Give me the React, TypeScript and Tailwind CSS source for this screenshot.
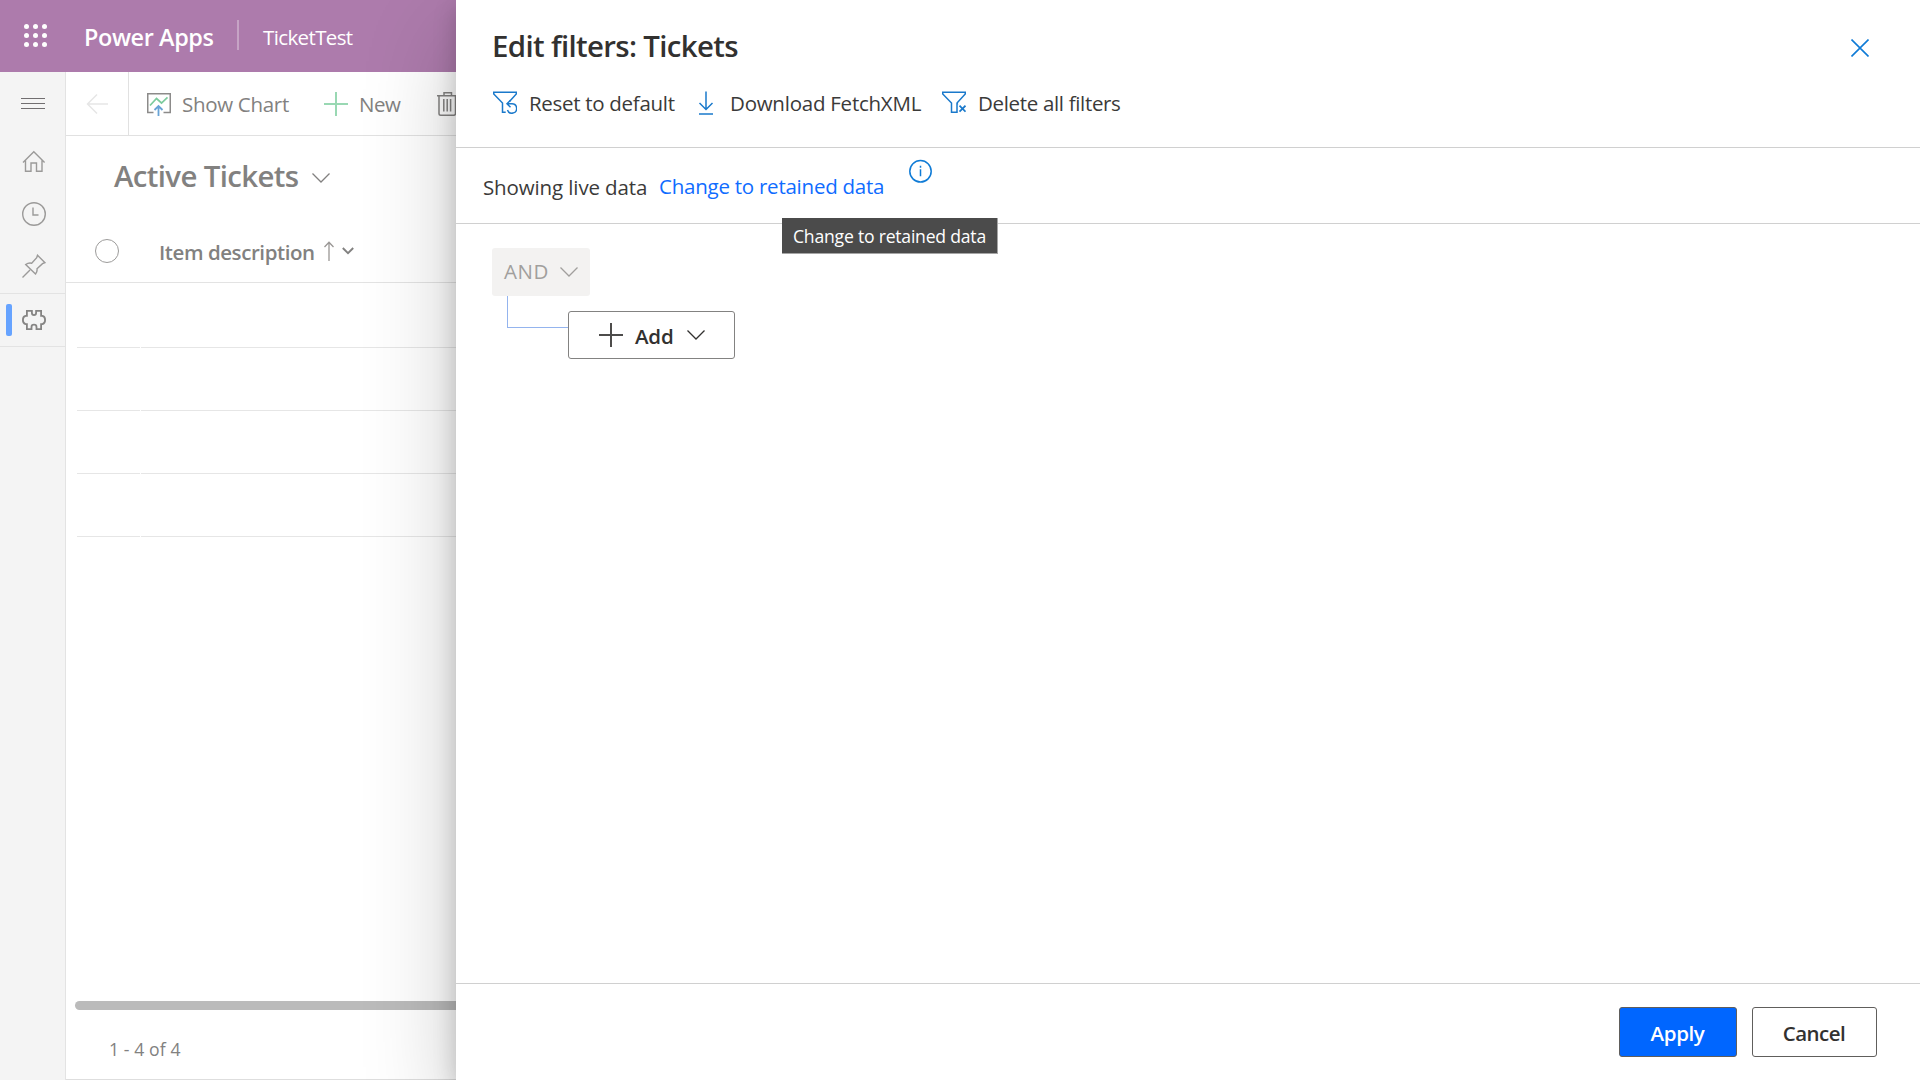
import type { ReactNode } from 'react';

type IconProps = { className?: string };

function Icon({ className = '', size = 24, sw = 1.5, children }: { className?: string; size?: number; sw?: number; children: ReactNode }) {
  return (
    <svg className={`block shrink-0 ${className}`} width={size} height={size} viewBox={`0 0 ${size} ${size}`} fill="none" stroke="currentColor" strokeWidth={sw}>
      {children}
    </svg>
  );
}

function Waffle({ className }: IconProps) {
  return (
    <Icon className={className}>
      <g fill="currentColor" stroke="none">
        {[2.5, 11.5, 20.5].map((y) => [2.5, 11.5, 20.5].map((x) => <circle key={`${x}-${y}`} cx={x} cy={y} r="2.5" />))}
      </g>
    </Icon>
  );
}

function Chevron({ className }: IconProps) {
  return (
    <svg className={`block shrink-0 ${className ?? ''}`} width="18" height="10" viewBox="0 0 18 10" fill="none" stroke="currentColor" strokeWidth="1.3">
      <path d="M.5.5 9 9 17.500.5" />
    </svg>
  );
}

function ShowChartIcon({ className }: IconProps) {
  return (
    <Icon className={className}>
      <path d="M6.500 19.500H.75V.75h22.500v18.750H16.500" stroke="#8c8b8a" />
      <path d="M3 12.500 9.500 5.500l5 4.500L20.500 4.300" stroke="#7ccb9d" strokeWidth="1.700" />
      <path d="M11.500 23V13M7.500 17l4-4 4 4" stroke="#67a3d6" strokeWidth="1.800" />
    </Icon>
  );
}

function PlusIcon({ className }: IconProps) {
  return (
    <Icon className={className} sw={2}>
      <path d="M12 0v24M0 12h24" />
    </Icon>
  );
}

function TrashIcon({ className }: IconProps) {
  return (
    <Icon className={className}>
      <path d="M1 3.750h22M8 3.500V.75h7.500V3.500M3 4v17.500q0 1.750 1.750 1.750h13q1.750 0 1.750-1.750V4M7.800 7v12.500M11.200 7v12.500M14.600 7v12.500" />
    </Icon>
  );
}

function Rail() {
  return (
    <nav className="flex w-[66px] shrink-0 flex-col border-r border-[#e3e3e3] bg-[#f4f4f4] text-[#9b9a99]">
      <Icon className="mt-[20px] ml-[21px] text-[#716e70]" sw={1.200}>
        <path d="M0 6.500h24M0 11.500h24M0 16.500h24" />
      </Icon>
      <Icon className="mt-[34px] ml-[22px]" sw={1.400}>
        <path d="M1 12.500 11.800 1.800 22.600 12.500M3.500 10.500V21.300H9V13h5.500v8.300H20V10.500" />
      </Icon>
      <Icon className="mt-[28px] ml-[22px]" sw={1.400}>
        <circle cx="12" cy="12" r="11.300" />
        <path d="M11 5.500v7.500h5.500" />
      </Icon>
      <Icon className="mt-[28px] ml-[22px]" sw={1.400}>
        <path d="M.5 23.500 8 16M15.500 1.200l7.500 7.500-2.500 1-5.500 5q.500 3-1.500 5.300L3.700 10.500Q6.500 8.500 9.700 9.200l5-5.500z" />
      </Icon>
      <div className="mt-[15px] flex h-[54px] items-center border-y border-[#e3e3e3]">
        <div className="ml-[6px] h-8 w-[6px] rounded-[2px] bg-[#66a3ff]" />
        <Icon className="ml-[10px] text-[#858483]" sw={1.800}>
          <path d="M4.900 2.900h5v2.200q0 2 2.100 2t2.100-2V2.900h5v5h1.200q2.800.600 2.800 4.100t-2.800 4.100h-1.200v5h-4.600v-2.200q0-2.200-2.500-2.200t-2.500 2.200v2.200H4.900v-5H3.700Q.9 15.500.9 12t2.800-4.100h1.200z" />
        </Icon>
      </div>
    </nav>
  );
}

function GridRow() {
  return (
    <div className="ml-[11px] flex h-[63px] gap-[1px]">
      <div className="w-[63px] border-b border-[#e6e6e6]" />
      <div className="flex-1 border-b border-[#e6e6e6]" />
    </div>
  );
}

function TicketView() {
  return (
    <main className="flex flex-1 flex-col border-b border-[#dedede] bg-white text-[20.5px] text-[#828180]">
      <div className="flex h-16 shrink-0 items-center border-b border-[#e1e1e1] whitespace-nowrap">
        <div className="flex h-full w-[63px] items-center border-r border-[#e1e1e1] text-[#e6e6e6]">
          <Icon className="ml-[20px]">
            <path d="M22 12H1.500M11 2.500 1.500 12 11 21.500" />
          </Icon>
        </div>
        <ShowChartIcon className="ml-[18px] mt-[2px]" />
        <span className="ml-[11px] w-[142px] pt-[2px] tracking-[-0.3px]">Show Chart</span>
        <PlusIcon className="text-[#99d8b3]" />
        <span className="ml-[11px] w-[77px] pt-[2px] tracking-[-0.45px]">New</span>
        <TrashIcon className="text-[#858483]" />
      </div>
      <div className="flex h-20 shrink-0 items-center pl-[48px] whitespace-nowrap">
        <h1 className="w-[198px] pt-px text-[29.4px] font-semibold tracking-[-0.63px]">Active Tickets</h1>
        <Chevron className="mt-[3px]" />
      </div>
      <div className="flex h-[67px] shrink-0 items-start border-b border-[#e3e3e3] whitespace-nowrap">
        <div className="mt-[23px] ml-[29px] size-6 rounded-full border border-[#9c9b9a]" />
        <span className="mt-[20px] ml-[40px] w-[165px] leading-[32px] font-semibold tracking-[-0.43px]">Item description</span>
        <svg className="mt-[25px] block shrink-0" width="10" height="20" viewBox="0 0 10 20" fill="none" stroke="#9a9795" strokeWidth="1.300">
          <path d="M5 20V1.500M.5 6 5 1.200 9.500 6" />
        </svg>
        <svg className="mt-[31px] ml-[8px] block shrink-0" width="12" height="8" viewBox="0 0 12 8" fill="none" stroke="currentColor" strokeWidth="1.900">
          <path d="M.8 1 6 6.200 11.200 1" />
        </svg>
      </div>
      <div className="pt-[2px]">
        <GridRow />
        <GridRow />
        <GridRow />
        <GridRow />
      </div>
      <div className="mt-auto ml-[9px] h-[9px] w-full shrink-0 rounded-full bg-[#bbbbbb]" />
      <footer className="flex h-[69px] shrink-0 items-center pt-[9px] pl-[43px] text-[17.6px] tracking-[0.1px]">1 - 4 of 4</footer>
    </main>
  );
}

function Command({ icon, label, className }: { icon: ReactNode; label: string; className: string }) {
  return (
    <button className={`flex items-center text-left whitespace-nowrap ${className}`}>
      {icon}
      <span>{label}</span>
    </button>
  );
}

function FilterPanel() {
  return (
    <section className="relative flex w-[1464px] shrink-0 flex-col bg-white text-[20.5px] text-[#3b3a39] shadow-[0_38px_86px_rgba(0,0,0,0.22),0_7px_22px_rgba(0,0,0,0.18)]">
      <header className="flex h-[148px] shrink-0 flex-col border-b border-[#d0d0d0]">
        <div className="mt-[24px] flex h-[44px] items-center justify-between pr-[51px] pl-[36px]">
          <h2 className="text-[29.4px] font-semibold tracking-[-0.65px] text-[#323130]">Edit filters: Tickets</h2>
          <Icon size={18} sw={1.600} className="mt-[4px] text-[#0f7bd6]">
            <path d="M.5.5l17 17M17.500.5l-17 17" />
          </Icon>
        </div>
        <div className="mt-[19px] flex h-[32px] items-center pl-[37px]">
          <Command
            className="w-[201px] gap-[12px] tracking-[-0.3px]"
            label="Reset to default"
            icon={
              <Icon className="text-[#1a79cb]">
                <path d="M16.500 10.500 23.300 3V1.200H.75V3l8.750 9v9.300h3.200" />
                <path d="M14 12.800h5a4.700 4.700 0 1 1-4.500 6.200M17.500 9.300 14 12.800l3.500 3.500" />
              </Icon>
            }
          />
          <Command
            className="w-[248px] gap-[12px] tracking-[-0.24px]"
            label="Download FetchXML"
            icon={
              <Icon className="text-[#1a79cb]">
                <path d="M12 .5v18M5.500 12 12 18.500 18.500 12M5 23h14" />
              </Icon>
            }
          />
          <Command
            className="gap-[12px] tracking-[-0.33px]"
            label="Delete all filters"
            icon={
              <Icon className="text-[#1a79cb]">
                <path d="M16 12.500 15 13v8.300H9.500V12L.75 3V1.200h22.500V3L15 12v1.500" />
                <path d="M17.500 14.700l6 6M23.500 14.700l-6 6" strokeWidth="1.700" />
              </Icon>
            }
          />
        </div>
      </header>

      <div className="flex h-[76px] shrink-0 items-start border-b border-[#d0d0d0] whitespace-nowrap">
        <span className="mt-[23px] ml-[27px] w-[176px] leading-[32px] tracking-[-0.12px]">Showing live data</span>
        <a className="mt-[22px] w-[249px] leading-[32px] tracking-[-0.24px] text-[#0f6cff]">Change to retained data</a>
        <Icon size={24} className="mt-[11px] text-[#0f7bd6]">
          <circle cx="12.500" cy="12.300" r="10.700" />
          <path d="M12.500 10.300v7M12.500 6.800v2" />
        </Icon>
      </div>

      <div className="flex flex-1 flex-col pt-[24px] pl-[36px]">
        <button className="flex h-12 w-[98px] items-center rounded-[3px] bg-[#f3f2f1] pl-[12px] text-left text-[#a19f9d]">
          <span className="w-[56px] pb-[1px] tracking-[0.6px]">AND</span>
          <Chevron className="-mt-[1px]" />
        </button>
        <div className="flex items-start pl-[15px]">
          <div className="h-8 w-[61px] border-b border-l border-[#94b4ee]" />
          <button className="mt-[15px] flex h-12 w-[167px] items-center rounded-[3px] border border-[#838281] pl-[30px] text-left text-[#323130]">
            <PlusIcon className="text-[#4d4c4b]" />
            <span className="ml-[12px] w-[52px] pt-[2px] font-semibold tracking-[-0.2px]">Add</span>
            <Chevron />
          </button>
        </div>
      </div>

      <footer className="flex h-[97px] shrink-0 items-start justify-end gap-[15px] border-t border-[#d0d0d0] pt-[23px] pr-[43px] font-semibold">
        <button className="flex h-[50px] w-[118px] items-center justify-center rounded-[3px] border border-[#605e5c] bg-[#0066ff] pt-[2px] pr-px tracking-[-0.4px] text-white">Apply</button>
        <button className="flex h-[50px] w-[125px] items-center justify-center rounded-[3px] border border-[#605e5c] bg-white pt-[2px] pr-px tracking-[-0.5px] text-[#323130]">Cancel</button>
      </footer>

      <div className="absolute top-[218px] left-[326px] flex h-[36px] w-[216px] items-center border-r border-b border-[#a5a5a5] bg-[#4b4b4b] pt-[2px] pl-[11px] text-[17.6px] tracking-[-0.22px] whitespace-nowrap text-white">
        Change to retained data
      </div>
    </section>
  );
}

export default function App() {
  return (
    <div className="flex h-[1080px] w-[1920px] overflow-hidden bg-white font-['Open_Sans','Noto_Sans',sans-serif]">
      <div className="flex w-[456px] shrink-0 flex-col overflow-hidden">
        <header className="flex h-[72px] shrink-0 items-center bg-[#ad7bac] whitespace-nowrap text-white">
          <Waffle className="ml-[24px]" />
          <span className="ml-[36px] w-[153px] pt-[3px] text-[23.4px] font-semibold tracking-[-0.38px]">Power Apps</span>
          <div className="h-[30px] w-[2px] -translate-y-px bg-[#c6a3c5]" />
          <span className="ml-[24px] pt-[2px] text-[20.5px] tracking-[-0.62px]">TicketTest</span>
        </header>
        <div className="flex min-h-0 flex-1">
          <Rail />
          <TicketView />
        </div>
      </div>
      <FilterPanel />
    </div>
  );
}
